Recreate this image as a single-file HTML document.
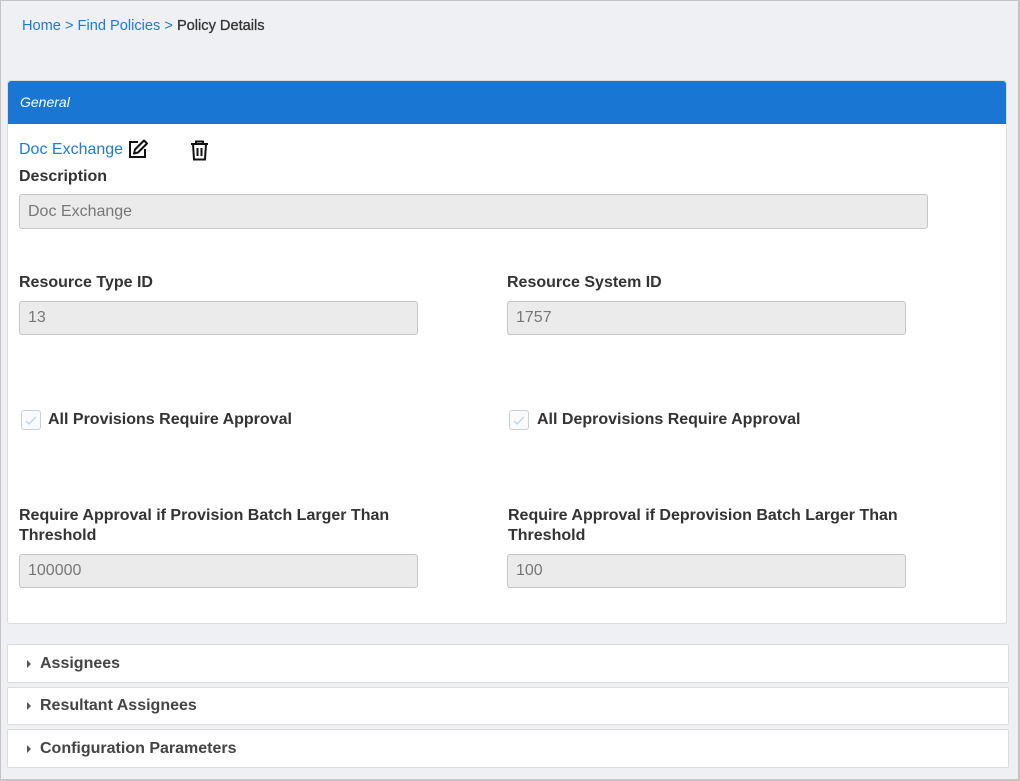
<!DOCTYPE html>
<html><head><meta charset="utf-8"><style>
*{box-sizing:border-box;margin:0;padding:0}
body{width:1020px;height:781px;background:#eef0f4;font-family:"Liberation Sans",Arial,sans-serif;position:relative;overflow:hidden}
.frame{position:absolute;left:0;top:0;width:1020px;height:781px;border:2px solid #c4c4c4;border-left-width:1px;border-top-width:1px}
.crumb{position:absolute;left:22px;top:18px;font-size:14.6px;color:#1f7ad8}
.crumb b{color:#333;font-weight:normal;-webkit-text-stroke:.3px #333}
.panel{position:absolute;left:7px;top:80px;width:1000px;height:544px;background:#fff;border:1px solid #dcdcdc;border-radius:3px}
.hdr{height:43px;background:#1976d2;border-radius:3px 3px 0 0;color:#fff;font-style:italic;font-size:14px;padding:13px 12px}
.abs{position:absolute}
.lbl{font-size:16px;font-weight:bold;color:#333;line-height:20px}
.inp{position:absolute;background:#ebebeb;border:1px solid #c6c6c6;border-radius:3px;font-size:16px;color:#777;padding:0 8px;display:flex;align-items:center}
.cb{position:absolute;width:20px;height:20px;border:1px solid #c8d0d8;border-radius:3px;background:#fafbfc}
.col{position:absolute;left:7px;width:1002px;background:#fff;border:1px solid #dcdcdc;border-radius:2px;font-size:16px;font-weight:bold;color:#444;padding-left:32px;display:flex;align-items:center}
.col:before{content:"";position:absolute;left:19px;top:50%;margin-top:-4px;border-left:4px solid #555;border-top:4px solid transparent;border-bottom:4px solid transparent}
</style></head><body>
<div class="crumb">Home &gt; Find Policies &gt; <b>Policy Details</b></div>
<div class="panel"><div class="hdr">General</div></div>
<div class="abs" style="left:19px;top:141px;font-size:16px;color:#1f7ad8">Doc Exchange</div>
<svg class="abs" style="left:128px;top:139px" width="21" height="20" viewBox="0 0 21 20"><path d="M10 3H2v15h15v-8" fill="none" stroke="#111" stroke-width="2"/><path d="M16 1.5l3 3L10 13.5l-4 1 1-4z" fill="none" stroke="#111" stroke-width="2" stroke-linejoin="round"/></svg>
<svg class="abs" style="left:190px;top:140px" width="19" height="21" viewBox="0 0 19 21"><path d="M1 4h17M6 4V1.5h7V4M3 4l1 15.5h11L16 4" fill="none" stroke="#111" stroke-width="2"/><path d="M7.5 8v8M11.5 8v8" stroke="#111" stroke-width="2"/></svg>
<div class="abs lbl" style="left:19px;top:167px">Description</div>
<div class="inp" style="left:19px;top:194px;width:909px;height:35px">Doc Exchange</div>
<div class="abs lbl" style="left:19px;top:273px">Resource Type ID</div>
<div class="inp" style="left:19px;top:301px;width:399px;height:34px">13</div>
<div class="abs lbl" style="left:507px;top:273px">Resource System ID</div>
<div class="inp" style="left:507px;top:301px;width:399px;height:34px">1757</div>
<div class="cb" style="left:21px;top:410px"></div><svg class="abs" style="left:25px;top:416px" width="12" height="10"><path d="M1 5l3 3 7-7" fill="none" stroke="#b8d4ec" stroke-width="1.3"/></svg>
<div class="abs lbl" style="left:48px;top:410px">All Provisions Require Approval</div>
<div class="cb" style="left:509px;top:410px"></div><svg class="abs" style="left:513px;top:416px" width="12" height="10"><path d="M1 5l3 3 7-7" fill="none" stroke="#b8d4ec" stroke-width="1.3"/></svg>
<div class="abs lbl" style="left:537px;top:410px">All Deprovisions Require Approval</div>
<div class="abs lbl" style="left:19px;top:506px">Require Approval if Provision Batch Larger Than<br>Threshold</div>
<div class="inp" style="left:19px;top:554px;width:399px;height:34px">100000</div>
<div class="abs lbl" style="left:508px;top:506px">Require Approval if Deprovision Batch Larger Than<br>Threshold</div>
<div class="inp" style="left:507px;top:554px;width:399px;height:34px">100</div>
<div class="col" style="top:644px;height:39px">Assignees</div>
<div class="col" style="top:687px;height:38px">Resultant Assignees</div>
<div class="col" style="top:729px;height:39px">Configuration Parameters</div>
<div class="frame"></div>
</body></html>
